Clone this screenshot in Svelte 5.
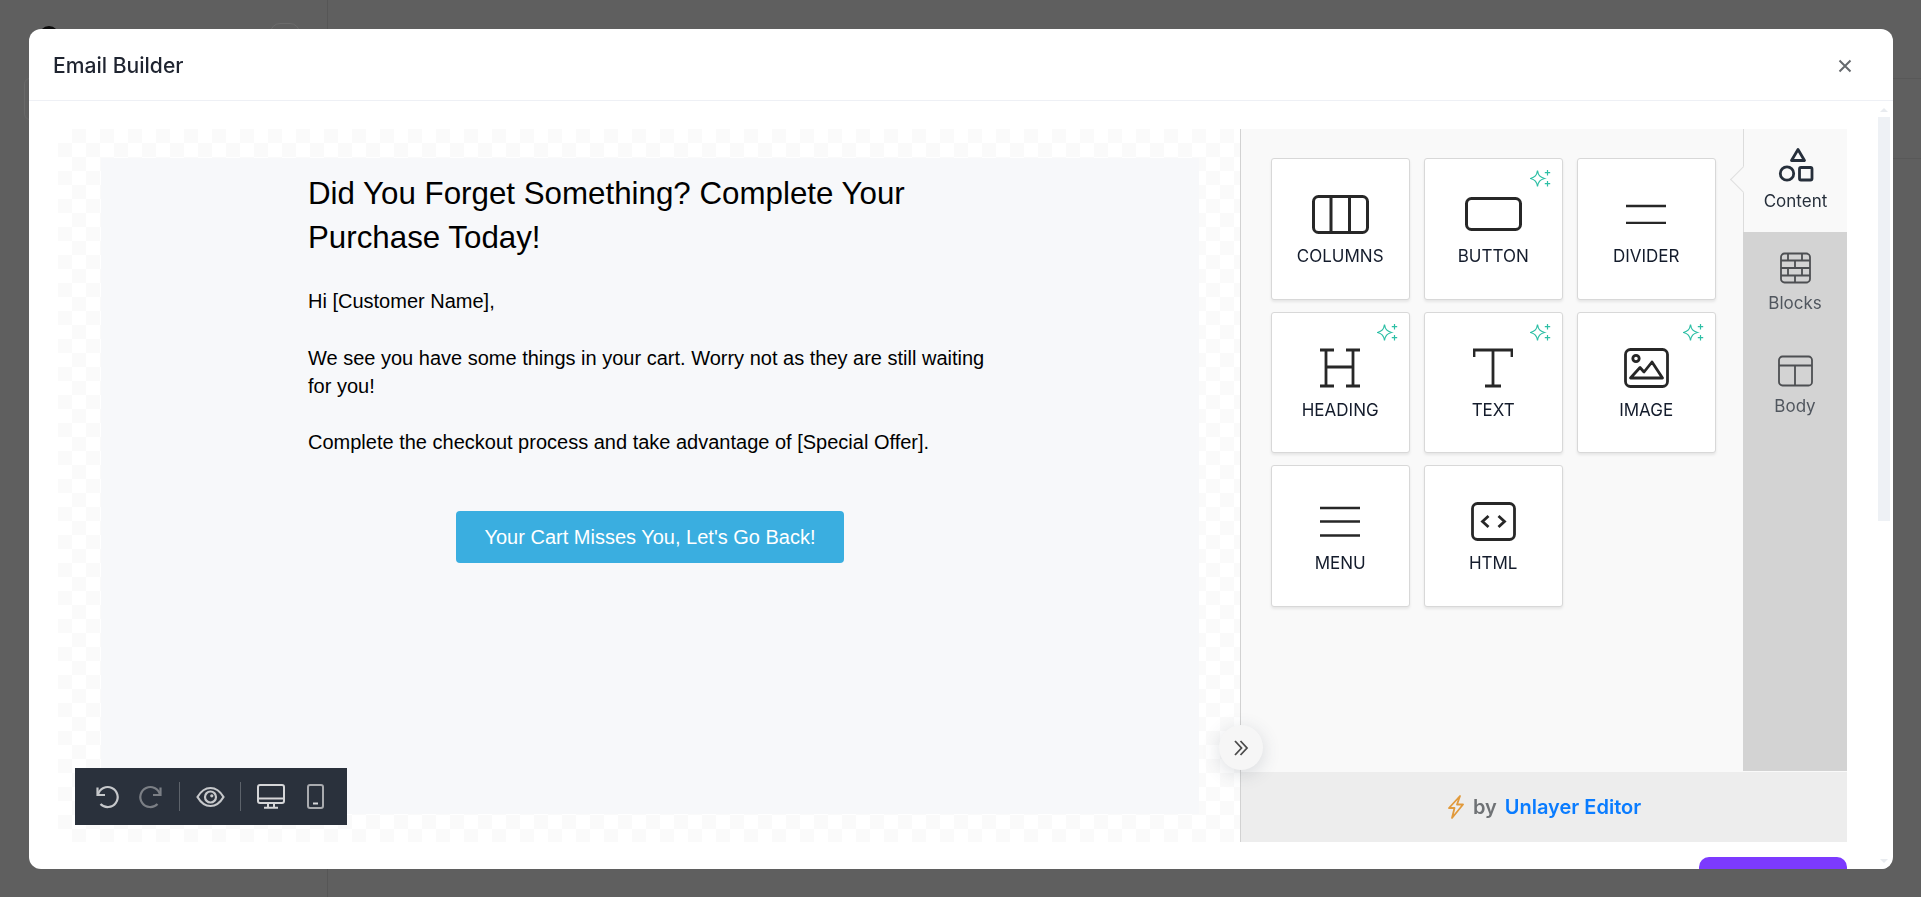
<script>
  const tools = [
    { id: 'columns', label: 'COLUMNS', ai: false },
    { id: 'button', label: 'BUTTON', ai: true },
    { id: 'divider', label: 'DIVIDER', ai: false },
    { id: 'heading', label: 'HEADING', ai: true },
    { id: 'text', label: 'TEXT', ai: true },
    { id: 'image', label: 'IMAGE', ai: true },
    { id: 'menu', label: 'MENU', ai: false },
    { id: 'html', label: 'HTML', ai: false }
  ];
</script>

<div class="backdrop">
  <span class="bg-dot"></span>
  <span class="bg-ring"></span>
  <span class="bg-box"></span>
  <span class="bg-vline"></span>
  <span class="bg-hline one"></span>
  <span class="bg-hline two"></span>
</div>

<div class="modal">
  <header class="head">
    <h2>Email Builder</h2>
    <button class="close" aria-label="Close">
      <svg width="14" height="14" viewBox="0 0 14 14"><path d="M1.500 1.500l11 11M12.500 1.500l-11 11" stroke="#666a6e" stroke-width="2" fill="none"/></svg>
    </button>
  </header>

  <div class="scrollarea">
    <div class="content">
      <div class="editor">
        <section class="canvas">
          <div class="email">
            <div class="column">
              <h1>Did You Forget Something? Complete Your Purchase Today!</h1>
              <p>Hi [Customer Name],</p>
              <p>We see you have some things in your cart. Worry not as they are still waiting for you!</p>
              <p>Complete the checkout process and take advantage of [Special Offer].</p>
              <div class="cta-row"><a class="cta" href="#top">Your Cart Misses You, Let's Go Back!</a></div>
            </div>
          </div>

          <div class="toolbar">
            <svg class="tb" style="margin-left:19px" width="26" height="26" viewBox="0 0 26 26" fill="none" stroke="#c6c8cb" stroke-width="2.200"><path d="M4 10.500A10 10 0 1 1 6.500 20"/><path d="M3.500 3.500v7.500H11"/></svg>
            <svg class="tb" style="margin-left:18px" width="26" height="26" viewBox="0 0 26 26" fill="none" stroke="#7b7f85" stroke-width="2.200"><path d="M22 10.500A10 10 0 1 0 19.500 20"/><path d="M22.500 3.500v7.500H15"/></svg>
            <i class="sep" style="margin-left:15px"></i>
            <svg class="tb" style="margin-left:16px" width="29" height="22" viewBox="0 0 29 22" fill="none" stroke="#c6c8cb" stroke-width="2.200"><path d="M1.500 11C5 5 9.500 2 14.500 2s9.500 3 13 9c-3.500 6-8 9-13 9s-9.500-3-13-9z"/><circle cx="14.500" cy="11" r="5.500"/><circle cx="15.800" cy="9.800" r="1.600" fill="#c6c8cb" stroke="none"/></svg>
            <i class="sep" style="margin-left:15px"></i>
            <svg class="tb" style="margin-left:16px" width="28" height="25" viewBox="0 0 28 25" fill="none" stroke="#d5d6d8" stroke-width="2"><rect x="1" y="1" width="26" height="18" rx="2"/><path d="M1 14.500h26M11 19v4M17 19v4M7 23.800h14"/></svg>
            <svg class="tb" style="margin-left:22px" width="17" height="25" viewBox="0 0 17 25" fill="none" stroke="#a9abaf" stroke-width="2"><rect x="1" y="1" width="15" height="23" rx="2"/><path d="M6 19.500h5" stroke="#d5d6d8"/></svg>
          </div>

          <button class="collapse" aria-label="Collapse panel">
            <svg width="16" height="18" viewBox="0 0 16 18" fill="none" stroke="#4b4b4b" stroke-width="1.800"><path d="M2 2l6.500 7L2 16M7.500 2L14 9l-6.500 7"/></svg>
          </button>
        </section>

        <aside class="panel">
          <div class="panel-main">
            <div class="grid">
              {#each tools as t}
                <div class="card">
                  {#if t.ai}
                    <svg class="spark" width="21" height="19" viewBox="0 0 21 19" fill="none" stroke="#2dbfa5" stroke-width="1.200">
                      <path d="M7.500 1.500C8.300 6.500 10 8.300 14.500 9.500 10 10.700 8.300 12.500 7.500 17.500 6.700 12.500 5 10.700.5 9.500 5 8.300 6.700 6.500 7.500 1.500z"/>
                      <path d="M17.500 1v5.500M14.800 3.700h5.400M17.500 12v5.500M14.800 14.700h5.400"/>
                    </svg>
                  {/if}
                  <div class="icon">
                    {#if t.id === 'columns'}
                      <svg width="57" height="39" viewBox="0 0 57 39" fill="none" stroke="#272727" stroke-width="3"><rect x="1.500" y="1.500" width="54" height="36" rx="5"/><path d="M19 1.500v36M37.500 1.500v36"/></svg>
                    {:else if t.id === 'button'}
                      <svg width="57" height="34" viewBox="0 0 57 34" fill="none" stroke="#272727" stroke-width="3"><rect x="1.500" y="1.500" width="54" height="31" rx="5"/></svg>
                    {:else if t.id === 'divider'}
                      <svg width="40" height="20" viewBox="0 0 40 20" fill="none" stroke="#272727" stroke-width="2.600"><path d="M0 2h40M0 19h40"/></svg>
                    {:else if t.id === 'heading'}
                      <svg width="40" height="40" viewBox="0 0 40 40" fill="none" stroke="#272727" stroke-width="2.800"><path d="M0 2h14M26 2h14M0 38h14M26 38h14M6 2v36M33 2v36M6 19h27"/></svg>
                    {:else if t.id === 'text'}
                      <svg width="40" height="40" viewBox="0 0 40 40" fill="none" stroke="#272727" stroke-width="2.800"><path d="M1 9V2h38v7M20 2v36M12 38h16"/></svg>
                    {:else if t.id === 'image'}
                      <svg width="45" height="40" viewBox="0 0 45 40" fill="none" stroke="#272727" stroke-width="2.800"><rect x="1.500" y="1.500" width="42" height="37" rx="5"/><circle cx="12" cy="10.500" r="3.200"/><path d="M6.500 30h32L28 14l-8 10-4-4.500z" stroke-linejoin="round"/></svg>
                    {:else if t.id === 'menu'}
                      <svg width="40" height="31" viewBox="0 0 40 31" fill="none" stroke="#272727" stroke-width="2.600"><path d="M0 2h40M0 15.500h40M0 29.500h40"/></svg>
                    {:else}
                      <svg width="45" height="39" viewBox="0 0 45 39" fill="none" stroke="#272727" stroke-width="2.800"><rect x="1.500" y="1.500" width="42" height="36" rx="5"/><path d="M17.500 14l-6 5.500 6 5.500M27.500 14l6 5.500-6 5.500"/></svg>
                    {/if}
                  </div>
                  <span class="label">{t.label}</span>
                </div>
              {/each}
            </div>

            <nav class="tabs">
              <div class="tab active">
                <span class="notch"></span>
                <svg width="36" height="36" viewBox="0 0 36 36" fill="none" stroke="#262f3b" stroke-width="2.800"><path d="M20 2.500l6.500 11h-13z" stroke-linejoin="round"/><circle cx="9" cy="26.500" r="6.700"/><rect x="21.500" y="20.500" width="12.500" height="12.500" rx="1.500"/></svg>
                <span>Content</span>
              </div>
              <div class="tab">
                <svg width="31" height="31" viewBox="0 0 31 31" fill="none" stroke="#4d4f52" stroke-width="1.800"><rect x="1" y="1" width="29" height="29" rx="3.500"/><path d="M1 8h29M1 15.500h29M1 23h29M8 1v7M22 1v7M15 8v7.500M8 15.500V23M22 15.500V23M15 23v7"/></svg>
                <span>Blocks</span>
              </div>
              <div class="tab">
                <svg width="35" height="31" viewBox="0 0 35 31" fill="none" stroke="#4d4f52" stroke-width="1.800"><rect x="1" y="1" width="33" height="29" rx="3.500"/><path d="M1 10h33M17 10v20"/></svg>
                <span>Body</span>
              </div>
            </nav>
          </div>
          <footer class="brand">
            <svg width="18" height="24" viewBox="0 0 18 24" fill="none" stroke="#e19a3c" stroke-width="1.800" stroke-linejoin="round"><path d="M13 1L2 13h5.500L5 23l11-13.500h-6z"/></svg>
            <span class="by">by</span>
            <span class="ul">Unlayer Editor</span>
          </footer>
        </aside>
      </div>
      <div class="actions"><button class="save" aria-label="Save"></button></div>
    </div>

    <div class="scrollbar">
      <span class="arrow up"></span>
      <span class="track"></span>
      <span class="arrow down"></span>
    </div>
  </div>
</div>

<style>
  :global(body) {
    margin: 0;
    background: #5f5f5f;
    font-family: Inter, "Liberation Sans", sans-serif;
    overflow: hidden;
  }
  .backdrop { position: fixed; inset: 0; }
  .backdrop span { position: absolute; display: block; }
  .bg-dot { left: 39px; top: 26px; width: 20px; height: 20px; border-radius: 50%; background: #0b0b0b; }
  .bg-ring { left: 270px; top: 23px; width: 30px; height: 30px; border-radius: 10px; border: 1px solid #6c6c6c; box-sizing: border-box; }
  .bg-box { left: 24px; top: 78px; width: 20px; height: 42px; border-radius: 6px; border: 1px solid #696969; box-sizing: border-box; }
  .bg-vline { left: 327px; top: 0; width: 1px; height: 897px; background: #565656; }
  .bg-hline { left: 327px; right: 0; height: 1px; background: #585858; }
  .bg-hline.one { top: 78px; }
  .bg-hline.two { top: 158px; }

  .modal {
    position: relative;
    margin: 29px 28px 0 29px;
    height: 840px;
    background: #fff;
    border-radius: 12px;
    overflow: hidden;
    display: flex;
    flex-direction: column;
  }
  .head {
    flex: none;
    border-bottom: 1px solid #eef0f5;
    display: flex;
    align-items: center;
    justify-content: space-between;
    padding: 2px 41px 0 24px;
    box-sizing: content-box;
    height: 69px;
  }
  h2 { margin: 0; font-size: 21.100px; font-weight: 500; color: #1f2430; }
  .close { background: none; border: 0; padding: 0; display: flex; }

  .scrollarea { flex: 1; display: flex; min-height: 0; position: relative; }
  .content { flex: none; width: 1818px; padding: 28px 0 0 29px; box-sizing: border-box; }
  .editor { display: flex; height: 713px; }

  .canvas {
    position: relative;
    width: 1182px;
    flex: none;
    padding: 29px 41px 28px 43px;
    box-sizing: border-box;
    background: conic-gradient(#fafafa 25%, #fff 0 50%, #fafafa 0 75%, #fff 0) 0 0 / 28px 28px;
  }
  .email { height: 100%; background: #f7f8fa; font-family: "Liberation Sans", Arial, sans-serif; color: #000; }
  .column { width: 684px; margin: 0 auto; padding-top: 14px; }
  h1 { margin: 0 0 27px; font-size: 31.300px; line-height: 44px; font-weight: 400; }
  p { margin: 0 0 28.300px; font-size: 20px; line-height: 28.300px; }
  .cta-row { display: flex; justify-content: center; margin-top: 54px; }
  .cta {
    background: #3aaee0; color: #fff; text-decoration: none; border-radius: 4px;
    font-size: 20px; line-height: 52px; height: 52px; padding: 0 28px; white-space: nowrap;
  }

  .toolbar {
    position: absolute; left: 17px; top: 639px; width: 272px; height: 57px;
    background: #2a313c; display: flex; align-items: center;
  }
  .tb { flex: none; }
  .sep { width: 1px; height: 29px; background: #5d636b; flex: none; }

  .collapse {
    position: absolute; right: -23px; top: 596px; width: 44px; height: 45px; border-radius: 50%;
    background: #f6f6f6; border: 0; padding: 0; display: flex; align-items: center; justify-content: center;
    box-shadow: 0 4px 18px rgba(60, 70, 90, .18); z-index: 3;
  }

  .panel {
    flex: none; width: 607px; border-left: 1px solid #d2d2d2; box-sizing: border-box;
    display: flex; flex-direction: column; background: #f9f9f9;
  }
  .panel-main { height: 642px; flex: none; display: flex; }
  .grid {
    flex: 1; padding: 29.300px 0 0 29.700px; display: grid;
    grid-template-columns: repeat(3, 139px); grid-auto-rows: 141.300px; column-gap: 14px; row-gap: 12.300px;
    align-content: start; box-sizing: border-box;
  }
  .card {
    position: relative; background: #fff; border: 1px solid #d8d8d8; border-radius: 3px; box-sizing: border-box;
    box-shadow: 0 2px 3px rgba(0, 0, 0, .08); display: flex; flex-direction: column; align-items: center; padding-top: 29px;
  }
  .spark { position: absolute; right: 11px; top: 10px; }
  .icon { height: 52px; display: flex; align-items: center; justify-content: center; }
  .label { margin-top: 6px; font-size: 17px; line-height: 20px; color: #141c2c; }

  .tabs { width: 104px; flex: none; background: #d3d3d3; display: flex; flex-direction: column; }
  .tab {
    position: relative; height: 103px; flex: none; display: flex; flex-direction: column; align-items: center;
    color: #50565e; font-size: 17px; line-height: 20px; padding-top: 18px; box-sizing: border-box;
  }
  .tab svg { height: 36px; }
  .tab span:last-child { margin-top: 7px; }
  .tab.active span:last-child { margin-top: 8px; }
  .tab.active { background: #f9f9f9; color: #262f3b; border-left: 1px solid #dcdcdc; }
  .notch {
    position: absolute; left: -10.500px; top: 41px; width: 19px; height: 19px; background: #f9f9f9;
    border-left: 1px solid #dfdfdf; border-bottom: 1px solid #dfdfdf; transform: rotate(45deg); box-sizing: border-box;
  }

  .brand {
    margin-top: 1px; flex: 1; background: #ededed; display: flex; align-items: center; justify-content: center;
    font-size: 20px; font-weight: 600; gap: 8px;
  }
  .by { color: #6f7275; }
  .ul { color: #0a7cff; }

  .actions { display: flex; justify-content: flex-end; margin-top: 15px; }
  .save { width: 148px; height: 44px; background: #7c3aff; border: 0; border-radius: 10px; }

  .scrollbar { position: absolute; right: 3px; top: 0; bottom: 0; width: 12px; background: #fff; }
  .track { position: absolute; left: 0; right: 0; top: 16px; height: 404px; background: #eef1f5; }
  .arrow { position: absolute; left: 2px; width: 0; height: 0; border-left: 4px solid transparent; border-right: 4px solid transparent; }
  .arrow.up { top: 7px; border-bottom: 4px solid #e8ebef; }
  .arrow.down { bottom: 6px; border-top: 4px solid #e8ebef; }
</style>
